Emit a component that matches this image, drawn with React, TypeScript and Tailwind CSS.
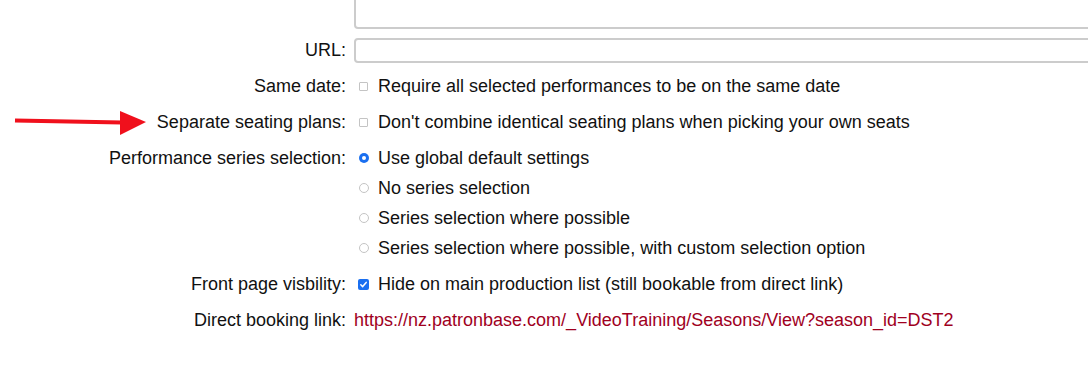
import React from "react";

function Box({ checked }: { checked?: boolean }) {
  if (checked) {
    return (
      <span className="ml-[4px] flex h-[11px] w-[11px] items-center justify-center rounded-[2px] bg-[#1a6ff0]">
        <svg width="9" height="9" viewBox="0 0 9 9">
          <path d="M1.8 4.7 L3.7 6.6 L7.2 2.4" stroke="white" strokeWidth="1.5" fill="none" strokeLinecap="round" strokeLinejoin="round" />
        </svg>
      </span>
    );
  }
  return <span className="ml-[5px] mr-[1px] block h-[9px] w-[9px] rounded-[1px] border border-[#c4c4c4] bg-white" />;
}

function Radio({ checked }: { checked?: boolean }) {
  if (checked) {
    return (
      <span className="ml-[5px] flex h-[10px] w-[10px] items-center justify-center rounded-full bg-[#1a6ff0]">
        <span className="block h-[4px] w-[4px] rounded-full bg-white" />
      </span>
    );
  }
  return <span className="ml-[5px] block h-[10px] w-[10px] rounded-full border border-[#c4c4c4] bg-white" />;
}

function Row({ label, children }: { label?: string; children: React.ReactNode }) {
  return (
    <div className="flex">
      <div className="w-[346px] shrink-0 whitespace-nowrap text-right leading-[36px]">{label}</div>
      <div className="ml-[8px] flex-1">{children}</div>
    </div>
  );
}

function Option({ control, text, h = "h-[36px]" }: { control: React.ReactNode; text: string; h?: string }) {
  return (
    <div className={`flex items-center ${h}`}>
      <span className="flex w-[24px] shrink-0 items-center">{control}</span>
      <span className="whitespace-nowrap">{text}</span>
    </div>
  );
}

export default function App() {
  return (
    <div
      className="relative h-[382px] w-[1088px] overflow-hidden bg-white text-[18px] text-[#111111]"
      style={{ fontFamily: '"Liberation Sans", Arial, sans-serif' }}
    >
      <Row>
        <div className="h-[29px] w-[760px] rounded-b-[4px] border-2 border-t-0 border-[#cccccc]" />
      </Row>
      <div className="h-[3px]" />
      <Row label="URL:">
        <div className="flex h-[36px] items-center">
          <div className="h-[25px] w-[760px] rounded-[4px] border-2 border-[#cccccc]" />
        </div>
      </Row>
      <Row label="Same date:">
        <Option control={<Box />} text="Require all selected performances to be on the same date" />
      </Row>
      <Row label="Separate seating plans:">
        <Option control={<Box />} text="Don't combine identical seating plans when picking your own seats" />
      </Row>
      <Row label="Performance series selection:">
        <div className="flex flex-col py-[3px]">
          <Option control={<Radio checked />} text="Use global default settings" h="h-[30px]" />
          <Option control={<Radio />} text="No series selection" h="h-[30px]" />
          <Option control={<Radio />} text="Series selection where possible" h="h-[30px]" />
          <Option control={<Radio />} text="Series selection where possible, with custom selection option" h="h-[30px]" />
        </div>
      </Row>
      <Row label="Front page visbility:">
        <Option control={<Box checked />} text="Hide on main production list (still bookable from direct link)" />
      </Row>
      <Row label="Direct booking link:">
        <div className="whitespace-nowrap leading-[36px] text-[#a0001e]">
          https://nz.patronbase.com/_VideoTraining/Seasons/View?season_id=DST2
        </div>
      </Row>

      <svg className="absolute left-0 top-[108px]" width="150" height="30" viewBox="0 0 150 30">
        <path d="M15 12.5 L122 14.5" stroke="#f0101c" strokeWidth="4" strokeLinecap="butt" />
        <path d="M120 3 L146 14 L120 27 Z" fill="#f0101c" />
      </svg>
    </div>
  );
}
